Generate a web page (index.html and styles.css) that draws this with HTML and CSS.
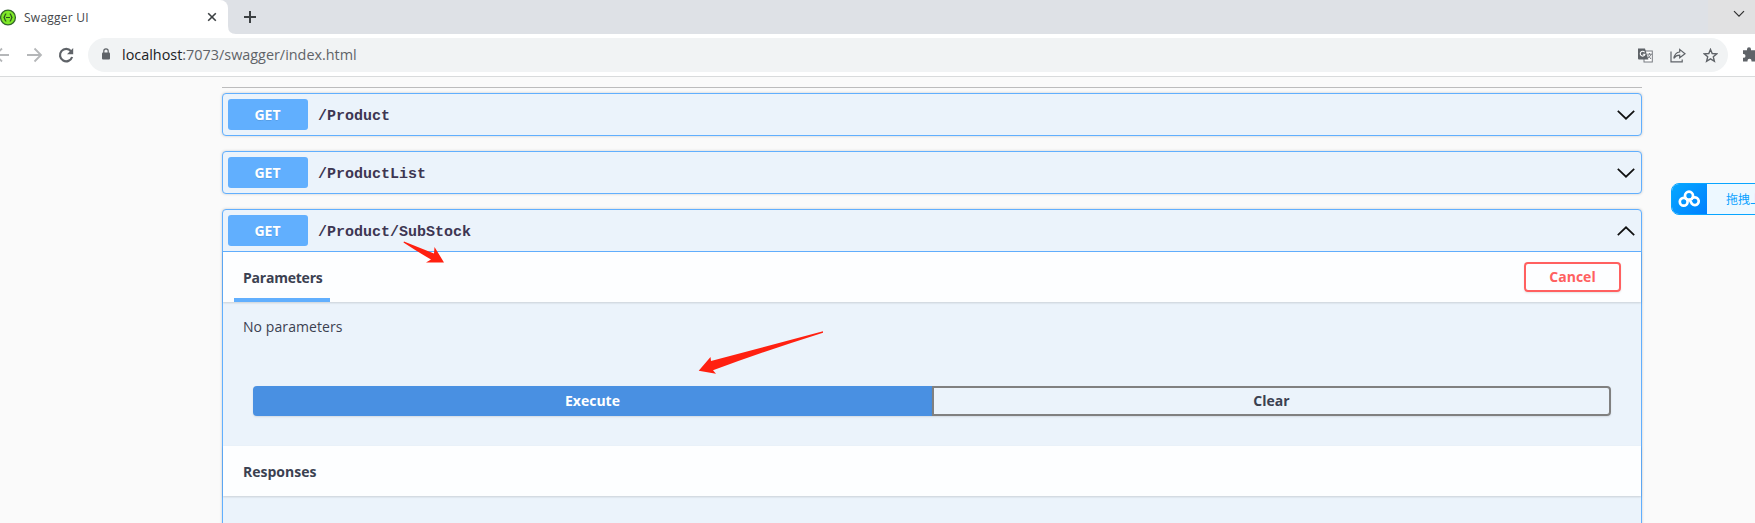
FILE: index.html
```html
<!DOCTYPE html>
<html lang="en">
<head>
<meta charset="utf-8">
<title>Swagger UI</title>
<link rel="stylesheet" href="styles.css">
</head>
<body>
<div class="window">
  <header class="tabs">
    <div class="tab">
      <svg class="favicon" width="17" height="17" viewBox="0 0 17 17"><circle cx="8" cy="8.5" r="7.4" fill="#7fea27" stroke="#35672c" stroke-width="1.3"/><path d="M6.3 4.8C4.3 4.8 5.7 8 3.6 8.5C5.7 9 4.3 12.2 6.3 12.2M9.7 4.8C11.7 4.8 10.3 8 12.4 8.5C10.3 9 11.7 12.2 9.7 12.2M6 8.5H10" fill="none" stroke="#27501c" stroke-width="1.2"/></svg>
      <span class="tab-title">Swagger UI</span>
      <svg class="tab-close" width="10" height="10" viewBox="0 0 10 10"><path d="M1.2 1.2L8.8 8.8M8.8 1.2L1.2 8.8" stroke="#3c4043" stroke-width="1.6"/></svg>
    </div>
    <svg class="tab-curve" width="8" height="8" viewBox="0 0 8 8"><path d="M0 0Q0 8 8 8H0Z" fill="#fff"/></svg>
    <svg class="new-tab" width="12" height="12" viewBox="0 0 12 12"><path d="M6 0V12M0 6H12" stroke="#3c4043" stroke-width="2"/></svg>
    <div class="caption"><svg width="12" height="8" viewBox="0 0 12 8"><path d="M1 1.2L6 6.2L11 1.2" fill="none" stroke="#303030" stroke-width="1.2"/></svg></div>
  </header>
  <div class="toolbar">
    <svg class="nav-icons" width="76" height="20" viewBox="0 0 76 20" fill="none"><path d="M-4 10H9M2 3.5L-4.5 10L2 16.5" stroke="#b5b7b9" stroke-width="1.8"/><path d="M27 10H40M34.5 3.5L41 10L34.5 16.5" stroke="#b5b7b9" stroke-width="1.8"/><path d="M71 6.2A6.2 6.2 0 1 0 72.1 12" stroke="#5f6368" stroke-width="2.2"/><path d="M73.2 3V9.2H67Z" fill="#5f6368"/></svg>
    <div class="address">
      <svg class="lock" width="8" height="12" viewBox="0 0 8 12"><rect y="4.4" width="8" height="7.2" rx="1" fill="#5f6368"/><path d="M1.8 5V3A2.2 2.2 0 0 1 6.2 3V5" fill="none" stroke="#5f6368" stroke-width="1.2"/></svg>
      <span class="url"><b>localhost</b>:7073/swagger/index.html</span>
      <div class="actions">
        <svg width="15" height="15" viewBox="0 0 15 15"><rect x="6" y="3" width="8.3" height="11" fill="#fff" stroke="#777b80"/><path d="M0 .5H7L10.4 11.5H1Q0 11.5 0 10.5Z" fill="#5f6368"/><path d="M6.6 4.3A2.4 2.4 0 1 0 7 6.2H4.8" fill="none" stroke="#fff" stroke-width="1.1"/><path d="M9.2 6.2H14M11.5 5V6.2M13 6.3Q12 9 9.8 10.2M10 7.2L13 11" fill="none" stroke="#777b80"/></svg>
        <svg width="16" height="15" viewBox="0 0 16 15" fill="none" stroke="#5f6368" stroke-width="1.2"><path d="M1 3.5V13.9H12.2V11.5M3.8 10.4C4.5 6.5 6.6 4.3 9.7 4V1.4L15 5.7L9.7 9.8V7.2C7.2 7.2 5.3 8.1 3.8 10.4Z"/></svg>
        <svg width="15" height="15" viewBox="0 0 15 15"><path d="M7.5 1.4L9.2 5.5L13.8 5.9L10.3 8.8L11.4 13.3L7.5 10.9L3.6 13.3L4.7 8.8L1.2 5.9L5.8 5.5Z" fill="none" stroke="#5f6368" stroke-width="1.4"/></svg>
      </div>
    </div>
    <svg class="puzzle" width="12" height="15" viewBox="0 0 12 15"><path d="M0 3.2H4V2.2A2 2 0 0 1 8 2.2V3.2H12V14.5H8.5V13.8A2 2 0 0 0 4.5 13.8V14.5H0V10.8H.6A1.9 1.9 0 0 0 .6 7H0Z" fill="#5f6368"/></svg>
  </div>

  <main class="page">
    <section class="block">
      <div class="summary"><span class="method">GET</span><span class="path">/Product</span><svg class="chevron" width="18" height="10" viewBox="0 0 18 10"><path d="M.8 .8L9 8.7L17.2 .8"/></svg></div>
    </section>
    <section class="block">
      <div class="summary"><span class="method">GET</span><span class="path">/ProductList</span><svg class="chevron" width="18" height="10" viewBox="0 0 18 10"><path d="M.8 .8L9 8.7L17.2 .8"/></svg></div>
    </section>
    <section class="block open">
      <div class="summary"><span class="method">GET</span><span class="path">/Product/SubStock</span><svg class="chevron" width="18" height="10" viewBox="0 0 18 10"><path d="M.8 9.2L9 1.3L17.2 9.2"/></svg></div>
      <div class="section-head"><h4 class="active"><span class="parameters">Parameters</span></h4><button class="cancel">Cancel</button></div>
      <p class="empty">No parameters</p>
      <div class="buttons"><button class="execute">Execute</button><button class="clear">Clear</button></div>
      <div class="section-head"><h4><span class="responses">Responses</span></h4></div>
    </section>
  </main>

  <div class="upload">
    <span class="upload-logo"><svg width="22" height="18" viewBox="0 0 22 18" fill="none" stroke="#fff" stroke-width="2.7"><circle cx="11" cy="5.7" r="4"/><circle cx="5.7" cy="11.7" r="3.9"/><path d="M11.1 8.8L14 13.9A3.9 3.9 0 1 0 13.2 9.7"/></svg></span>
    <span class="upload-text">拖拽上</span>
  </div>
  <svg class="arrows" width="1755" height="523" viewBox="0 0 1755 523"><path fill="#ff2010" d="M404 241.6L434 253.5L434.5 247L444 262.4L426 262.5L431 259.5Q418 252 403.5 242.5Z"/><path fill="#ff2010" d="M823 331.3L711 361L710.5 357L698.7 370.8L716 373.7L713 370.3Q768 350 823 332.7Z"/></svg>
</div>
</body>
</html>
```
FILE: styles.css
```css
* { box-sizing: border-box; }
body { margin: 0; background: #fafafa; color: #3b4151; font-family: "Open Sans", "Noto Sans CJK SC", sans-serif; font-size: 14px; }
.window { position: relative; height: 523px; overflow: hidden; }
svg { display: block; flex: none; }
.tabs { display: flex; align-items: center; height: 34px; background: #dee1e6; }
.tab { display: flex; align-items: center; width: 228px; height: 34px; background: #fff; border-top-right-radius: 8px; }
.tab-title { margin: 2px 0 0 7px; color: #45484c; font: 12px/16px "Open Sans", sans-serif; letter-spacing: .25px; }
.tab-close { margin-left: auto; margin-right: 11px; }
.tab-curve { align-self: flex-end; }
.new-tab { margin-left: 8px; }
.caption { display: flex; align-items: center; justify-content: center; width: 47px; height: 34px; margin-left: auto; padding: 0 0 6px 14px; background: #e1e1e2; }
.toolbar { display: flex; align-items: center; height: 43px; padding-bottom: 1px; background: #fff; border-bottom: 1px solid #d9dbdc; }
.address { display: flex; align-items: center; width: 1640px; height: 34px; margin: 1px 0 0 12px; padding: 0 10px 0 14px; border-radius: 17px; background: #f1f3f4; }
.lock { margin-bottom: 2px; }
.url { margin: 0 auto 2px 12px; color: #5f6368; font-size: 14.4px; }
.url b { color: #202124; font-weight: 400; }
.actions { display: flex; gap: 17px; }
.puzzle { margin-left: 15px; }
.page { display: grid; gap: 15px; width: 1420px; margin: 10px 0 0 222px; padding-top: 5px; border-top: 1px solid #bcbcbd; }
.block { border: 1px solid #61affe; border-radius: 4px; background: #ebf3fb; box-shadow: 0 0 3px rgba(0,0,0,.19); }
.open { height: 340px; }
.summary { display: flex; align-items: center; height: 41px; padding: 0 6px 0 5px; }
.open .summary { height: 42px; border-bottom: 1px solid #61affe; }
.method { width: 80px; height: 31px; padding-right: 1px; border-radius: 3px; background: #61affe; color: #fff; font-weight: 700; line-height: 31px; text-align: center; text-shadow: 0 1px 0 rgba(0,0,0,.1); }
.path { margin: 5px auto 0 10px; color: #3d3652; font: 700 15px/20px "Liberation Mono", monospace; }
.chevron { margin-top: 1px; }
.chevron path { fill: none; stroke: #111; stroke-width: 1.7; }
.section-head { display: flex; align-items: center; justify-content: space-between; height: 50px; padding: 0 20px 0 11px; background: rgba(255,255,255,.87); box-shadow: 0 1px 2px rgba(0,0,0,.15); }
h4 { height: 50px; width: 96px; margin: 0; padding-left: 9px; font-size: 14px; line-height: 51px; white-space: nowrap; }
.parameters { letter-spacing: -.22px; }
.active { border-bottom: 4px solid #61affe; }
button { font: 700 14px/20px "Open Sans", sans-serif; color: #3b4151; background: transparent; border: 2px solid #808080; border-radius: 4px; height: 30px; padding: 2px; box-shadow: 0 1px 2px rgba(0,0,0,.1); }
.cancel { width: 97px; border-color: #ff6060; color: #ff6060; }
.empty { margin: 0; padding: 15px 20px 49px; line-height: 20px; letter-spacing: .08px; }
.buttons { display: flex; margin: 0 30px 30px; }
.buttons button { flex: 1; }
.buttons .execute { color: #fff; background: #4990e2; border-color: #4990e2; border-radius: 4px 0 0 4px; }
.buttons .clear { border-radius: 0 4px 4px 0; }
.upload { position: absolute; top: 183px; left: 1671px; display: flex; width: 160px; height: 32px; border: 1px solid #08a5ff; border-radius: 8px; overflow: hidden; background: #edf8ff; }
.upload-logo { display: grid; place-items: center; width: 35px; padding-right: 2px; background: linear-gradient(135deg, #06a7ff, #0080ff); }
.upload-text { margin-left: 19px; color: #08a0ff; font: 12px/29px "Noto Sans CJK SC", sans-serif; }
.arrows { position: absolute; inset: 0; pointer-events: none; }
```
